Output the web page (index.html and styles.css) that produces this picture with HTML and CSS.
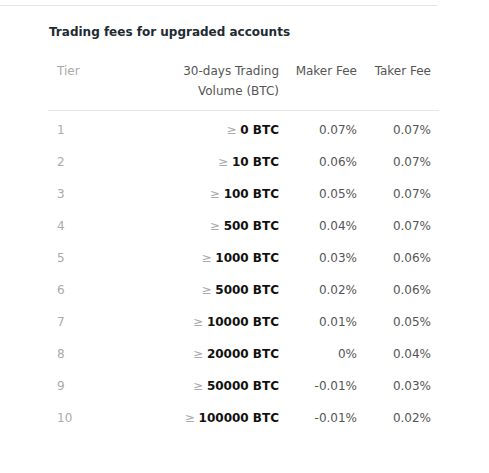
FILE: index.html
```html
<!DOCTYPE html>
<html>
<head>
<meta charset="utf-8">
<link rel="stylesheet" href="styles.css">
</head>
<body>
<div class="topline"></div>
<section class="fees">
  <h2 class="title">Trading fees for upgraded accounts</h2>
  <table class="fee-table">
    <thead>
      <tr>
        <th class="c-tier">Tier</th>
        <th class="c-vol">30-days Trading<br>Volume (BTC)</th>
        <th class="c-fee">Maker Fee</th>
        <th class="c-fee c-taker">Taker Fee</th>
      </tr>
    </thead>
    <tbody>
      <tr><td class="c-tier">1</td><td class="c-vol"><span class="ge">≥</span> <b>0 BTC</b></td><td class="c-fee">0.07%</td><td class="c-fee c-taker">0.07%</td></tr>
      <tr><td class="c-tier">2</td><td class="c-vol"><span class="ge">≥</span> <b>10 BTC</b></td><td class="c-fee">0.06%</td><td class="c-fee c-taker">0.07%</td></tr>
      <tr><td class="c-tier">3</td><td class="c-vol"><span class="ge">≥</span> <b>100 BTC</b></td><td class="c-fee">0.05%</td><td class="c-fee c-taker">0.07%</td></tr>
      <tr><td class="c-tier">4</td><td class="c-vol"><span class="ge">≥</span> <b>500 BTC</b></td><td class="c-fee">0.04%</td><td class="c-fee c-taker">0.07%</td></tr>
      <tr><td class="c-tier">5</td><td class="c-vol"><span class="ge">≥</span> <b>1000 BTC</b></td><td class="c-fee">0.03%</td><td class="c-fee c-taker">0.06%</td></tr>
      <tr><td class="c-tier">6</td><td class="c-vol"><span class="ge">≥</span> <b>5000 BTC</b></td><td class="c-fee">0.02%</td><td class="c-fee c-taker">0.06%</td></tr>
      <tr><td class="c-tier">7</td><td class="c-vol"><span class="ge">≥</span> <b>10000 BTC</b></td><td class="c-fee">0.01%</td><td class="c-fee c-taker">0.05%</td></tr>
      <tr><td class="c-tier">8</td><td class="c-vol"><span class="ge">≥</span> <b>20000 BTC</b></td><td class="c-fee">0%</td><td class="c-fee c-taker">0.04%</td></tr>
      <tr><td class="c-tier">9</td><td class="c-vol"><span class="ge">≥</span> <b>50000 BTC</b></td><td class="c-fee">-0.01%</td><td class="c-fee c-taker">0.03%</td></tr>
      <tr><td class="c-tier">10</td><td class="c-vol"><span class="ge">≥</span> <b>100000 BTC</b></td><td class="c-fee">-0.01%</td><td class="c-fee c-taker">0.02%</td></tr>
    </tbody>
  </table>
</section>
</body>
</html>
```

FILE: styles.css
```css
html, body {
  margin: 0;
  padding: 0;
  background: #ffffff;
}
body {
  font-family: "DejaVu Sans", Verdana, sans-serif;
  font-size: 12px;
  color: #555;
}
.topline {
  width: 437px;
  height: 5px;
  border-bottom: 1px solid #e3e3e3;
}
.fees {
  width: 391px;
  margin-left: 48px;
}
.title {
  margin: 0;
  padding: 17px 0 0 1px;
  font-size: 12px;
  line-height: 18px;
  font-weight: bold;
  color: #1e2b33;
}
.fee-table {
  width: 100%;
  border-collapse: collapse;
  margin-top: 20px;
}
.fee-table th {
  font-weight: normal;
  line-height: 20px;
  padding: 0 8px 9px;
  vertical-align: top;
  border-bottom: 1px solid #e6e6e6;
  color: #555;
}
.fee-table td {
  line-height: 20px;
  padding: 9px 8px 3px;
  color: #555;
}
.c-tier {
  text-align: left;
  color: #aaa !important;
}
.fee-table .c-tier {
  padding-left: 9px;
}
.c-vol {
  text-align: right;
}
.c-fee {
  text-align: right;
  width: 62px;
}
.c-taker {
  width: 58px;
}
.ge {
  color: #aaa;
}
.c-vol b {
  color: #111;
  font-weight: bold;
}
```
